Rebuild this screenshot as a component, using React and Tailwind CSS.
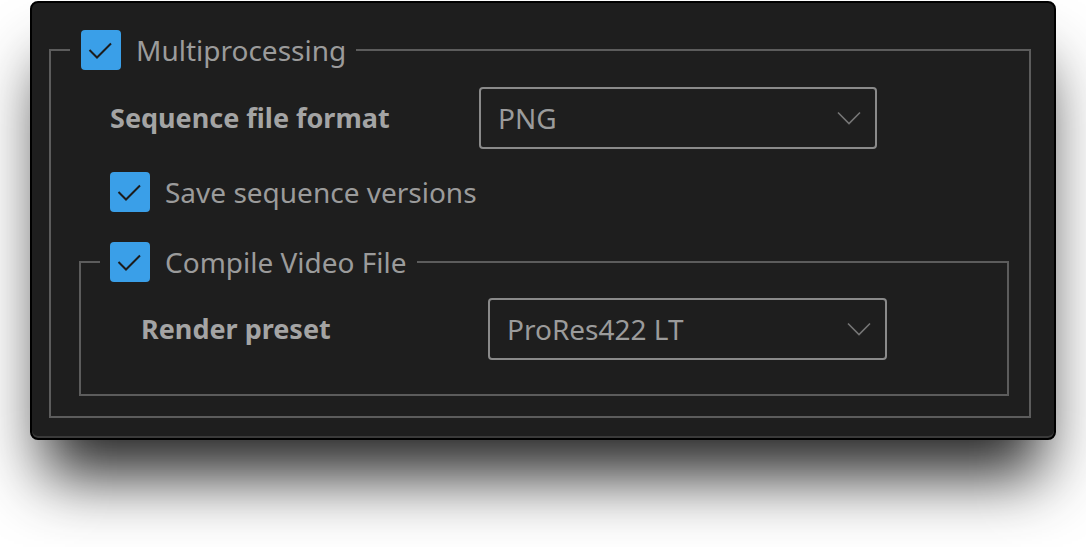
import React from "react";

function Check() {
  return (
    <span className="flex h-[40px] w-[40px] shrink-0 items-center justify-center rounded-[4px] bg-[#3a9fe8]">
      <svg width="40" height="40" viewBox="0 0 40 40" fill="none">
        <path d="M8.5 20 L16 27.5 L30 13.5" stroke="#1c1c1c" strokeWidth="2" />
      </svg>
    </span>
  );
}

function Dropdown({ value, width }) {
  return (
    <div
      className={`flex h-[62px] ${width} items-center justify-between rounded-[4px] border-2 border-[#8a8a8a] pl-[17px] pr-[14px]`}
    >
      <span>{value}</span>
      <svg width="24" height="14" viewBox="0 0 24 14" fill="none">
        <path d="M1 1.5 L12 12.5 L23 1.5" stroke="#767676" strokeWidth="1.6" />
      </svg>
    </div>
  );
}

export default function App() {
  return (
    <div
      className="min-h-[547px] bg-white pt-[1px] pl-[30px] text-[28px] text-[#9b9b9b]"
      style={{ fontFamily: '"Noto Sans", "Open Sans", sans-serif' }}
    >
      <div className="w-[1026px] rounded-[8px] border-2 border-black bg-[#1e1e1e] pt-[27px] pb-[20px] pl-[17px] pr-[23px] shadow-[inset_0_-2px_0_#3a3a3a,0_50px_60px_-14px_rgba(0,0,0,0.85)]">
        <fieldset className="border-2 border-[#5c5c5c]">
          <legend className="ml-[19px] flex items-center gap-[15px] pl-[11px] pr-[10px] leading-[40px]">
            <Check />
            <span>Multiprocessing</span>
          </legend>

          <div className="pl-[28px] pr-[20px] pb-[20px]">
            <div className="mt-[17px] ml-[31px] flex items-center">
              <span className="w-[369px] text-[27px] font-bold text-[#a4a4a4]">Sequence file format</span>
              <Dropdown value="PNG" width="w-[398px]" />
            </div>

            <div className="mt-[23px] ml-[31px] flex items-center gap-[15px] leading-[40px]">
              <Check />
              <span>Save sequence versions</span>
            </div>

            <fieldset className="mt-[30px] border-2 border-[#5c5c5c]">
              <legend className="ml-[19px] flex items-center gap-[15px] pl-[10px] pr-[10px] leading-[40px]">
                <Check />
                <span>Compile Video File</span>
              </legend>
              <div className="mt-[16px] flex items-center pl-[60px] pb-[34px]">
                <span className="w-[347px] text-[27px] font-bold text-[#a4a4a4]">Render preset</span>
                <Dropdown value="ProRes422 LT" width="w-[399px]" />
              </div>
            </fieldset>
          </div>
        </fieldset>
      </div>
    </div>
  );
}
